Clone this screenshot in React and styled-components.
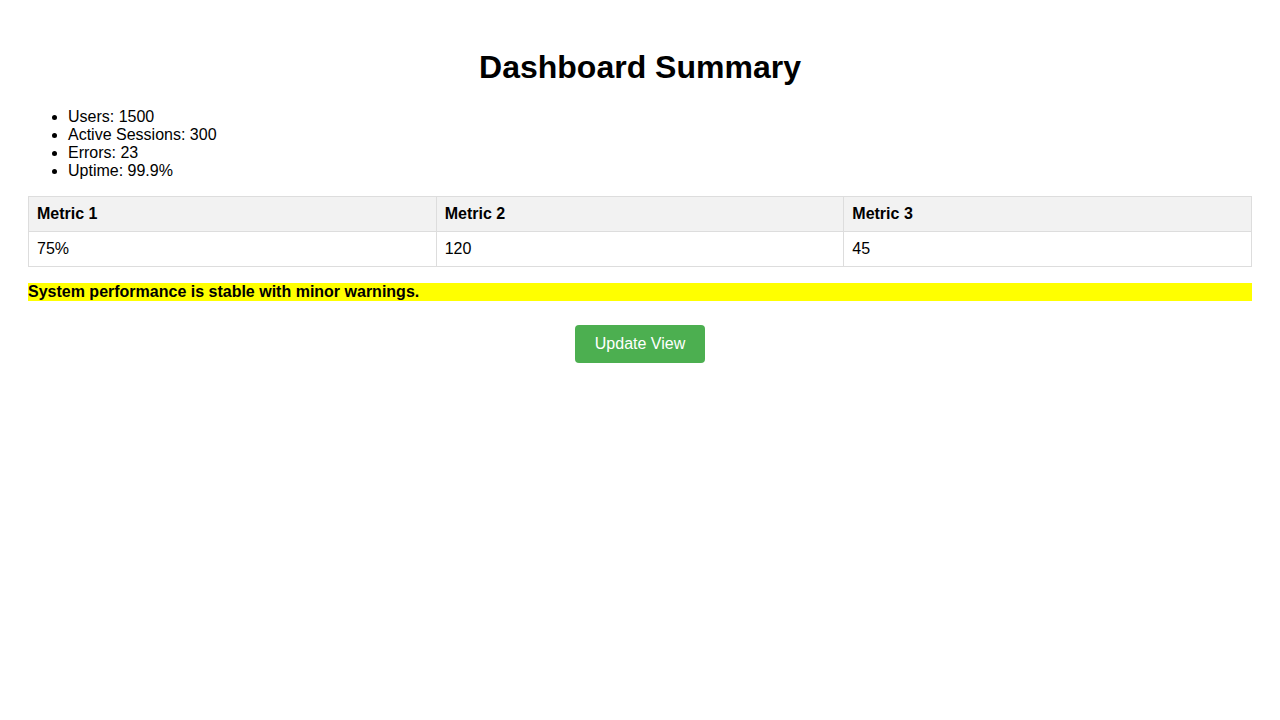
import React from 'react';
import styled, { createGlobalStyle } from 'styled-components';

const GlobalStyle = createGlobalStyle`
  body {
    margin: 8px;
    padding: 20px;
    font-family: "Liberation Sans", Arial, sans-serif;
    color: #000;
    background: #fff;
  }
`;

const Title = styled.h1`
  text-align: center;
  font-size: 32px;
  margin: 21.44px 0;
`;

const StatList = styled.ul`
  margin: 16px 0;
  padding-left: 40px;
  font-size: 16px;
`;

const Table = styled.table`
  width: 100%;
  border-collapse: collapse;
  font-size: 16px;
`;

const Th = styled.th`
  border: 1px solid #ddd;
  padding: 8px;
  text-align: left;
  background: #f2f2f2;
`;

const Td = styled.td`
  border: 1px solid #ddd;
  padding: 8px;
`;

const Notice = styled.p`
  margin: 16px 0;
  background: yellow;
  font-weight: bold;
`;

const Actions = styled.div`
  display: flex;
  justify-content: center;
  padding-top: 8px;
`;

const Button = styled.button`
  background: #4caf50;
  color: #fff;
  border: none;
  border-radius: 4px;
  padding: 10px 20px;
  font-family: "Liberation Sans", Arial, sans-serif;
  font-size: 16px;
  cursor: pointer;
`;

const stats = ['Users: 1500', 'Active Sessions: 300', 'Errors: 23', 'Uptime: 99.9%'];

const App = () => {
  return (
    <div>
      <GlobalStyle />
      <Title>Dashboard Summary</Title>
      <StatList>
        {stats.map((s, i) => (
          <li key={i}>{s}</li>
        ))}
      </StatList>
      <Table>
        <thead>
          <tr>
            <Th>Metric 1</Th>
            <Th>Metric 2</Th>
            <Th>Metric 3</Th>
          </tr>
        </thead>
        <tbody>
          <tr>
            <Td>75%</Td>
            <Td>120</Td>
            <Td>45</Td>
          </tr>
        </tbody>
      </Table>
      <Notice>System performance is stable with minor warnings.</Notice>
      <Actions>
        <Button>Update View</Button>
      </Actions>
    </div>
  );
};

export default App;
